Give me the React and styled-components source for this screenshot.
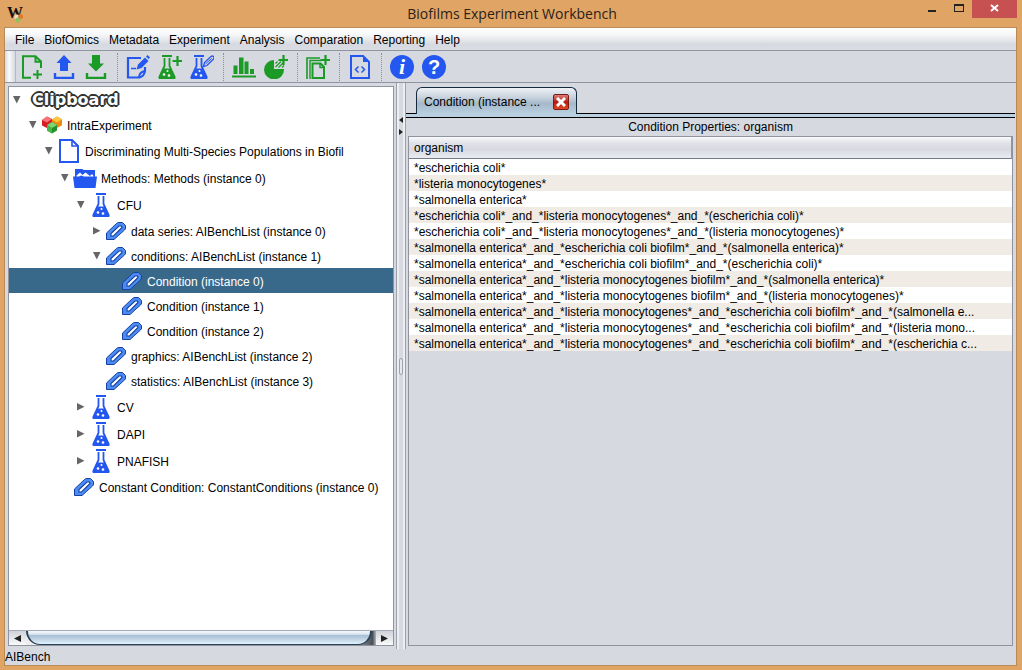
import React from "react";
import styled, { createGlobalStyle, css } from "styled-components";

const BLUE = "#2456f0";
const GREEN = "#1c9a26";

const treeRows = [
  { depth: 0, open: true, logo: true, label: "Clipboard" },
  { depth: 1, open: true, icon: "blocks", label: "IntraExperiment" },
  { depth: 2, open: true, icon: "doc", label: "Discriminating Multi-Species Populations in Biofil" },
  { depth: 3, open: true, icon: "folder", label: "Methods: Methods (instance 0)" },
  { depth: 4, open: true, icon: "flask", label: "CFU" },
  { depth: 5, open: false, icon: "clip", label: "data series: AIBenchList (instance 0)" },
  { depth: 5, open: true, icon: "clip", label: "conditions: AIBenchList (instance 1)" },
  { depth: 6, icon: "clip", label: "Condition (instance 0)", selected: true },
  { depth: 6, icon: "clip", label: "Condition (instance 1)" },
  { depth: 6, icon: "clip", label: "Condition (instance 2)" },
  { depth: 5, icon: "clip", label: "graphics: AIBenchList (instance 2)" },
  { depth: 5, icon: "clip", label: "statistics: AIBenchList (instance 3)" },
  { depth: 4, open: false, icon: "flask", label: "CV" },
  { depth: 4, open: false, icon: "flask", label: "DAPI" },
  { depth: 4, open: false, icon: "flask", label: "PNAFISH" },
  { depth: 3, icon: "clip", label: "Constant Condition: ConstantConditions (instance 0)" },
];

const organisms = [
  "*escherichia coli*",
  "*listeria monocytogenes*",
  "*salmonella enterica*",
  "*escherichia coli*_and_*listeria monocytogenes*_and_*(escherichia coli)*",
  "*escherichia coli*_and_*listeria monocytogenes*_and_*(listeria monocytogenes)*",
  "*salmonella enterica*_and_*escherichia coli biofilm*_and_*(salmonella enterica)*",
  "*salmonella enterica*_and_*escherichia coli biofilm*_and_*(escherichia coli)*",
  "*salmonella enterica*_and_*listeria monocytogenes biofilm*_and_*(salmonella enterica)*",
  "*salmonella enterica*_and_*listeria monocytogenes biofilm*_and_*(listeria monocytogenes)*",
  "*salmonella enterica*_and_*listeria monocytogenes*_and_*escherichia coli biofilm*_and_*(salmonella e...",
  "*salmonella enterica*_and_*listeria monocytogenes*_and_*escherichia coli biofilm*_and_*(listeria mono...",
  "*salmonella enterica*_and_*listeria monocytogenes*_and_*escherichia coli biofilm*_and_*(escherichia c...",
];

const menus = ["File", "BiofOmics", "Metadata", "Experiment", "Analysis", "Comparation", "Reporting", "Help"];

//-- icons

const Icon = ({ children, w = 24, h = 24 }) => (
  <svg width={w} height={h} viewBox={`0 0 ${w} ${h}`} fill="none" aria-hidden="true">
    {children}
  </svg>
);

const FlaskShape = ({ color }) => (
  <>
    <path d="M4 1h10" stroke={color} strokeWidth="2" />
    <path d="M6.500 3v8L1.500 21.500q-.8 2 1.200 2h12.600q2 0 1.200-2L11.500 11V3" stroke={color} strokeWidth="1.800" />
    <path d="M5.500 13.500h7L17 23.500H1z" fill={color} />
    <circle cx="9.500" cy="16" r="1" fill="#fff" />
    <circle cx="6" cy="19.500" r="1.300" fill="#fff" />
    <circle cx="11" cy="20.500" r="1.300" fill="#fff" />
  </>
);

const FlaskIcon = () => (
  <Icon>
    <g transform="translate(3 0)">
      <FlaskShape color={BLUE} />
    </g>
  </Icon>
);

const NewFileIcon = () => (
  <Icon>
    <path d="M11 22.800H3V1.200h12.500L21 6.500V13M15.500 1.500v5.300H21" stroke={GREEN} strokeWidth="2" />
    <path d="M17.500 15v9M13 19.500h9" stroke={GREEN} strokeWidth="2" />
  </Icon>
);

const UploadIcon = () => (
  <Icon>
    <path d="M12 0l7.500 8H16v8H8V8H4.500z" fill={BLUE} />
    <path d="M3 18v5h18v-5" stroke={BLUE} strokeWidth="2.400" />
  </Icon>
);

const DownloadIcon = () => (
  <Icon>
    <path d="M12 16.500L4 8.500h4V0h8v8.500h4z" fill={GREEN} />
    <path d="M3 18v5h18v-5" stroke={GREEN} strokeWidth="2.400" />
  </Icon>
);

const EditIcon = () => (
  <Icon>
    <path d="M15 3H2v19.500h11.500q5-1.500 5.500-7V12" stroke={BLUE} strokeWidth="2.200" />
    <path d="M13 22q.5-5 6-6" stroke={BLUE} strokeWidth="2" />
    <path d="M5 13.500h5" stroke={BLUE} strokeWidth="1.500" />
    <path d="M10.500 14.500l1.500-5 7-7 3.500 3.500-7 7z" fill={BLUE} />
    <path d="M20 1.500l1.500-1.500 2.500 2.500L22.500 4z" fill={BLUE} />
  </Icon>
);

const FlaskPlusIcon = () => (
  <Icon>
    <FlaskShape color={GREEN} />
    <path d="M19.500 1v10M14.500 6h9.500" stroke={GREEN} strokeWidth="2.200" />
  </Icon>
);

const FlaskEditIcon = () => (
  <Icon>
    <FlaskShape color={BLUE} />
    <path d="M13.500 11.500l1-4 6.500-6q1.500-1 2.500 0t0 2.500l-6.500 6.500z" fill="#d6d9e0" stroke={BLUE} strokeWidth="1.300" />
    <path d="M15.500 9l6-5.500" stroke={BLUE} />
  </Icon>
);

const BarsIcon = () => (
  <Icon>
    <path d="M0 20.500h24v2H0zM1.500 10.500h4v8.500h-4zM7 2.500h4.500V19H7zM12.500 6.500h4V19h-4zM18 14h4v5h-4z" fill={GREEN} />
  </Icon>
);

const PieIcon = () => (
  <Icon>
    <path d="M10 5v9h10a10 9.700 0 1 1-10-9z" fill={GREEN} />
    <path d="M11.500 8.500l2-2M11.500 12l5.500-5.500M14.500 12.500l5-5M18 12.500l2-2" stroke={GREEN} strokeWidth="1.200" />
    <path d="M19.500 0v10M14.500 5h9.500" stroke={GREEN} strokeWidth="2.200" />
  </Icon>
);

const CopyIcon = () => (
  <Icon>
    <path d="M1 24V3h13" stroke={GREEN} strokeWidth="1.600" />
    <path d="M4 24V5.500h11" stroke={GREEN} strokeWidth="1.400" />
    <path d="M6.500 8.500h8l3.500 3.500v11H6.500z" stroke={GREEN} strokeWidth="2" />
    <path d="M14 8.500V12.500h4" stroke={GREEN} strokeWidth="1.500" />
    <path d="M19.500 0v10M14.500 5h9.500" stroke={GREEN} strokeWidth="2.200" />
  </Icon>
);

const CodeIcon = () => (
  <Icon>
    <path d="M3 1h12l6 6v16H3z" stroke={BLUE} strokeWidth="2" />
    <path d="M15 1v6h6z" fill={BLUE} />
    <path d="M10.500 11.500L7.500 14.500l3 3M13.500 11.500l3 3-3 3" stroke={BLUE} strokeWidth="1.500" />
  </Icon>
);

const InfoIcon = () => (
  <Icon>
    <circle cx="12" cy="12" r="12" fill={BLUE} />
    <text x="12" y="19" textAnchor="middle" fill="#fff" fontFamily="Liberation Serif, serif" fontSize="22" fontWeight="bold" fontStyle="italic">i</text>
  </Icon>
);

const HelpIcon = () => (
  <Icon>
    <circle cx="12" cy="12" r="12" fill={BLUE} />
    <text x="12" y="19" textAnchor="middle" fill="#fff" fontFamily="Liberation Sans, sans-serif" fontSize="20" fontWeight="bold">?</text>
  </Icon>
);

const DocIcon = () => (
  <Icon>
    <path d="M3 1h12l6 6v16H3z" stroke={BLUE} strokeWidth="2" />
    <path d="M15 1v6h6" stroke={BLUE} strokeWidth="1.600" />
  </Icon>
);

const FolderIcon = () => (
  <Icon>
    <path d="M2 3h7l2 1h11v8H2z" fill={BLUE} />
    <path d="M3.500 9.500L7 6.500l2.500 2.500 3-2.500 4.500 3.500 2-2 1.500 2v1h-17z" fill="#fff" />
    <path d="M0 10.500h6l2-1 3 1h13L22.500 22h-21z" fill={BLUE} />
  </Icon>
);

const ClipIcon = () => (
  <Icon w={22} h={18}>
    <path d="M1.500 17.500V11L11.500 1.500q1-1 2.500-1h3.500l3 3v2.500q0 1-1 2L9 17.500z" fill="#4c8cf0" stroke="#1440a8" />
    <path d="M6 14v-2.500L14 4h2.500l.5 1.500L8.500 14z" fill="#fff" stroke="#1440a8" strokeWidth="1.100" />
  </Icon>
);

const BlocksIcon = () => (
  <Icon w={22} h={18}>
    <path d="M1 4l5-3.500L11 3v6.500L6 12 1 9.500z" fill="#d81c24" />
    <path d="M1 4l5-3.500L11 3 6 6.500z" fill="#f6747a" />
    <path d="M11 3.500L16 .5l5 2.800v6L16 12l-5-2.500z" fill="#f08a0c" />
    <path d="M11 3.500L16 .5l5 2.800L16 6.500z" fill="#fcc640" />
    <path d="M6 9l5-3 5 3v5.500L11 17.500l-5-3z" fill="#24902a" />
    <path d="M6 9l5-3 5 3-5 3z" fill="#7cd678" />
    <path d="M6 9l5 3v5.500l-5-3z" fill="#48b648" />
  </Icon>
);

const AppIcon = () => (
  <svg width="20" height="20" viewBox="0 0 20 20" aria-hidden="true">
    <text x="0" y="14" fontFamily="Liberation Serif, serif" fontSize="16" fontWeight="bold" fill="#111">W</text>
    <circle cx="10" cy="13" r="2.500" fill="#e8e0d0" />
    <circle cx="13.500" cy="12.500" r="2.500" fill="#e07a28" />
    <circle cx="11" cy="16" r="2.500" fill="#8cc060" />
  </svg>
);

const treeIcons = { blocks: BlocksIcon, doc: DocIcon, folder: FolderIcon, flask: FlaskIcon, clip: ClipIcon };

const tools = [
  [["New", NewFileIcon], ["Upload", UploadIcon], ["Download", DownloadIcon]],
  [["Edit", EditIcon], ["Add method", FlaskPlusIcon], ["Edit method", FlaskEditIcon]],
  [["Bar chart", BarsIcon], ["Add chart", PieIcon]],
  [["Compare", CopyIcon]],
  [["Source", CodeIcon]],
  [["About", InfoIcon], ["Help", HelpIcon]],
];

export default function App() {
  return (
    <>
      <GlobalStyle />
      <Desktop>
        <TitleBar>
          <AppIcon />
          <Title>Biofilms Experiment Workbench</Title>
          <WindowButtons>
            <WindowButton aria-label="Minimize">
              <svg width="11" height="10" aria-hidden="true"><path d="M2 6h8v2H2z" fill="#222" /></svg>
            </WindowButton>
            <WindowButton aria-label="Maximize">
              <svg width="11" height="10" aria-hidden="true"><path d="M1 0h10v8H1zM2 2v5h8V2z" fillRule="evenodd" fill="#222" /></svg>
            </WindowButton>
            <WindowButton $close aria-label="Close">
              <svg width="9" height="10" aria-hidden="true"><path d="M1 1l7 6M8 1l-7 6" stroke="#fff" strokeWidth="2" /></svg>
            </WindowButton>
          </WindowButtons>
        </TitleBar>
        <Frame>
          <MenuBar>
            {menus.map((m) => (
              <MenuItem key={m}>{m}</MenuItem>
            ))}
          </MenuBar>
          <ToolBar>
            <Handle />
            {tools.map((group, i) => (
              <ToolGroup key={i}>
                {group.map(([name, Glyph]) => (
                  <ToolButton key={name} aria-label={name}>
                    <Glyph />
                  </ToolButton>
                ))}
              </ToolGroup>
            ))}
          </ToolBar>
          <Main>
            <LeftPane>
              <Tree role="tree">
                {treeRows.map((r) => {
                  const Glyph = treeIcons[r.icon];
                  return (
                    <TreeRow
                      key={r.label}
                      role="treeitem"
                      $depth={r.depth}
                      $tall={["doc", "folder", "flask"].includes(r.icon)}
                      $selected={r.selected}
                    >
                      {r.open === undefined ? (
                        <Spacer />
                      ) : (
                        <Toggle aria-label={`Toggle ${r.label}`}>
                          <svg width="8" height="8" aria-hidden="true">
                            <path d={r.open ? "M0 0h7.500L3.800 7.500z" : "M0 0L7.500 3.800 0 7.500z"} fill="#666" />
                          </svg>
                        </Toggle>
                      )}
                      {Glyph && <Glyph />}
                      {r.logo ? <LogoText>{r.label}</LogoText> : <RowLabel>{r.label}</RowLabel>}
                    </TreeRow>
                  );
                })}
              </Tree>
              <ScrollBar>
                <ScrollButton aria-label="Scroll left">
                  <svg width="7" height="7" aria-hidden="true"><path d="M7 0v7L0 3.500z" fill="#222" /></svg>
                </ScrollButton>
                <Track>
                  <Thumb />
                </Track>
                <ScrollButton aria-label="Scroll right">
                  <svg width="7" height="7" aria-hidden="true"><path d="M0 0v7l7-3.500z" fill="#222" /></svg>
                </ScrollButton>
              </ScrollBar>
            </LeftPane>
            <Divider>
              <DividerArrows>
                <svg width="4" height="18" aria-hidden="true">
                  <path d="M4 0v6L0 3zM0 12v6l4-3z" fill="#222" />
                </svg>
              </DividerArrows>
              <Grip />
            </Divider>
            <RightPane>
              <TabRow>
                <Tab>
                  <span>Condition (instance ...</span>
                  <CloseTab aria-label="Close tab">
                    <svg width="10" height="10" aria-hidden="true"><path d="M1 1l8 8M9 1L1 9" stroke="#fff" strokeWidth="3" /></svg>
                  </CloseTab>
                </Tab>
              </TabRow>
              <TabStrip />
              <Caption>Condition Properties: organism</Caption>
              <TablePanel>
                <Table>
                  <thead>
                    <tr>
                      <HeadCell>organism</HeadCell>
                    </tr>
                  </thead>
                  <tbody>
                    {organisms.map((o) => (
                      <BodyRow key={o}>
                        <Cell>{o}</Cell>
                      </BodyRow>
                    ))}
                  </tbody>
                </Table>
              </TablePanel>
            </RightPane>
          </Main>
          <StatusBar>AIBench</StatusBar>
        </Frame>
      </Desktop>
    </>
  );
}

const GlobalStyle = createGlobalStyle`
  * { box-sizing: border-box; }
  body {
    margin: 0;
    font: 12px/16px "Liberation Sans", Arial, sans-serif;
    color: #000;
  }
  button {
    border: none;
    background: none;
    padding: 0;
    font: inherit;
    color: inherit;
  }
  svg { display: block; flex: none; }
`;

const Desktop = styled.div`
  min-height: 100vh;
  display: flex;
  flex-direction: column;
  background: #e0a565;
`;

const TitleBar = styled.header`
  height: 27px;
  padding: 0 5px 0 7px;
  display: grid;
  grid-template-columns: 1fr auto 1fr;
  align-items: center;
`;

const Title = styled.h1`
  margin: 0;
  font: 14px/24px "Open Sans", "Noto Sans", sans-serif;
  color: #2b2118;
`;

const WindowButtons = styled.div`
  display: flex;
  justify-content: flex-end;
  align-self: start;
`;

const WindowButton = styled.button`
  width: 27px;
  height: 18px;
  display: flex;
  align-items: center;
  justify-content: center;
  ${(p) =>
    p.$close &&
    css`
      width: 45px;
      background: #c75050;
    `}
`;

const Frame = styled.div`
  flex: 1;
  margin: 0 5px 4px 4px;
  border: 1px solid #b98a58;
  background: #d6d9e0;
  display: flex;
  flex-direction: column;
`;

const MenuBar = styled.nav`
  height: 23px;
  padding: 2px 0 0 5px;
  display: flex;
  align-items: center;
  background: linear-gradient(#fff, #f6f7f8 30%, #d6d9e0 75%, #dadde3);
  border-bottom: 1px solid #8f949e;
`;

const MenuItem = styled.button`
  padding: 0 5px;
`;

const ToolBar = styled.div`
  height: 32px;
  display: flex;
  align-items: center;
  border-bottom: 1px solid #8f949e;
`;

const Handle = styled.div`
  width: 11px;
  align-self: stretch;
  background: linear-gradient(90deg, #d6d9e0, #fafafb 40%, #d6d9e0);
  border-right: 1px solid #b4b8c0;
`;

const ToolGroup = styled.div`
  display: flex;
  & + & {
    margin-left: 5px;
    padding-left: 4px;
    border-left: 1px dotted #8a8f99;
  }
`;

const ToolButton = styled.button`
  width: 32px;
  height: 28px;
  padding: 2px 4px;
`;

const Main = styled.main`
  flex: 1;
  display: grid;
  grid-template-columns: minmax(0, 391fr) 10px minmax(0, 610fr);
`;

const LeftPane = styled.section`
  margin: 3px 2px 3px 3px;
  border: 1px solid #8f949e;
  background: #fff;
  display: flex;
  flex-direction: column;
`;

const Tree = styled.div`
  flex: 1;
  overflow: hidden;
`;

const TreeRow = styled.div`
  height: ${(p) => (p.$tall ? 27 : 25)}px;
  padding-left: ${(p) => p.$depth * 16}px;
  display: flex;
  align-items: center;
  white-space: nowrap;
  background: ${(p) => (p.$selected ? "#39698a" : "transparent")};
  color: ${(p) => (p.$selected ? "#fff" : "#000")};
`;

const RowLabel = styled.span`
  padding: 2px 0 0 4px;
`;

const Toggle = styled.button`
  width: 16px;
  height: 16px;
  display: flex;
  align-items: center;
  justify-content: center;
`;

const Spacer = styled.span`
  width: 16px;
`;

const LogoText = styled.span`
  padding-left: 7px;
  font: bold 16px/24px "DejaVu Sans", sans-serif;
  color: #fff;
  text-shadow: -2px 0 #333, 2px 0 #333, 0 -2px #333, 0 2px #333, -1px -1px #333, 1px -1px #333, -1px 1px #333,
    1px 1px #333;
`;

const ScrollBar = styled.div`
  height: 15px;
  display: flex;
  border-top: 1px solid #a4abb6;
`;

const ScrollButton = styled.button`
  width: 17px;
  display: flex;
  align-items: center;
  justify-content: center;
  background: linear-gradient(#d0d3da, #fafafb);
`;

const Track = styled.div`
  flex: 1;
  display: flex;
  padding-right: 4px;
  background: linear-gradient(90deg, #eee 90%, #4a5058 99%, #b0b4bb);
`;

const Thumb = styled.div`
  flex: 1;
  border: 1px solid #2a4257;
  border-width: 0 2px 1px 2px;
  border-radius: 0 0 14px 14px;
  background: linear-gradient(#f4f8fb, #dbe5ef 25%, #a9bfd4 35%, #c4d8e8 70%, #e2f3fb);
`;

const Divider = styled.div`
  display: grid;
  grid-template-rows: 1fr auto 1fr;
  justify-items: center;
  border: 1px solid #9ca1ab;
  border-width: 0 1px;
  box-shadow: inset 2px 0 #eceef2, inset -2px 0 #eceef2;
`;

const DividerArrows = styled.div`
  padding-top: 34px;
`;

const Grip = styled.div`
  width: 4px;
  height: 17px;
  border: 1px solid #9ca1ab;
  border-radius: 2px;
  background: #e6e8ec;
`;

const RightPane = styled.section`
  display: flex;
  flex-direction: column;
  padding: 4px 1px 3px 0;
`;

const TabRow = styled.div`
  height: 27px;
  padding-left: 10px;
  display: flex;
  border-bottom: 1px solid #000;
`;

const Tab = styled.div`
  width: 161px;
  height: 27px;
  padding: 2px 7px 0 7px;
  display: flex;
  align-items: center;
  justify-content: space-between;
  border: 1px solid #14293c;
  border-bottom: none;
  border-radius: 6px 6px 0 0;
  background: linear-gradient(#eef2f6, #c9d3de 35%, #a5b9cb 60%, #b9d0e0);
`;

const CloseTab = styled.button`
  width: 16px;
  height: 16px;
  display: flex;
  align-items: center;
  justify-content: center;
  border: 1px solid #7e1a14;
  border-radius: 2px;
  background: linear-gradient(#d88078, #b81a10 50%, #e04a20);
`;

const TabStrip = styled.div`
  height: 4px;
  background: #b9d0e0;
  border-bottom: 1px solid #000;
`;

const Caption = styled.h2`
  margin: 0;
  font: inherit;
  line-height: 18px;
  text-align: center;
`;

const TablePanel = styled.div`
  flex: 1;
  margin: 0 2px;
  border: 1px solid #8f949e;
`;

const Table = styled.table`
  width: 100%;
  table-layout: fixed;
  border-collapse: separate;
  border-spacing: 0;
`;

const HeadCell = styled.th`
  height: 22px;
  padding: 0 5px;
  font-weight: normal;
  text-align: left;
  background: linear-gradient(#fafafc, #e0e2e8 30%, #d8dae0 60%, #e8ebf2);
  border-right: 1px solid #8f949e;
  border-bottom: 1px solid #767b85;
`;

const BodyRow = styled.tr`
  background: #fff;
  &:nth-child(even) {
    background: #f0ebe4;
  }
`;

const Cell = styled.td`
  height: 16px;
  padding: 2px 5px 0;
  line-height: 14px;
  overflow: hidden;
  white-space: nowrap;
`;

const StatusBar = styled.footer`
  padding-top: 1px;
  line-height: 15px;
`;
